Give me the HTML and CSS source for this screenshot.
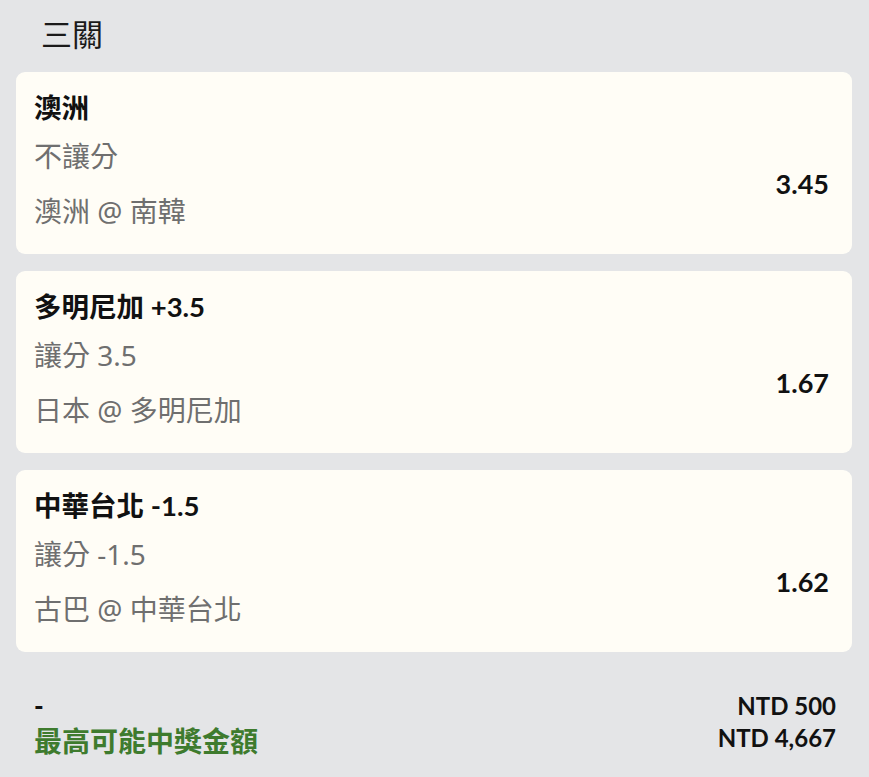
FILE: index.html
```html
<!DOCTYPE html>
<html lang="zh-Hant">
<head>
<meta charset="utf-8">
<title>三關</title>
<link rel="stylesheet" href="styles.css">
</head>
<body>
<div class="page">
  <h1 class="header">三關</h1>
  <div class="list">
    <div class="card">
      <div class="pick">澳洲</div>
      <div class="line line-1">不讓分</div>
      <div class="line line-2">澳洲 @ 南韓</div>
      <div class="odds">3.45</div>
    </div>
    <div class="card">
      <div class="pick">多明尼加 +3.5</div>
      <div class="line line-1">讓分 3.5</div>
      <div class="line line-2">日本 @ 多明尼加</div>
      <div class="odds">1.67</div>
    </div>
    <div class="card">
      <div class="pick">中華台北 -1.5</div>
      <div class="line line-1">讓分 -1.5</div>
      <div class="line line-2">古巴 @ 中華台北</div>
      <div class="odds">1.62</div>
    </div>
  </div>
  <div class="footer">
    <div class="footer-left">
      <div class="dash">-</div>
      <div class="max-label">最高可能中獎金額</div>
    </div>
    <div class="footer-right">
      <div class="amount">NTD 500</div>
      <div class="amount">NTD 4,667</div>
    </div>
  </div>
</div>
</body>
</html>
```
FILE: styles.css
```css
html, body {
  margin: 0;
  padding: 0;
  background: #e4e5e7;
}
body {
  font-family: "Lato", "Noto Sans CJK TC", sans-serif;
  color: #111;
}
.page {
  padding: 0 17px 0 16px;
}
.header {
  margin: 0;
  padding: 13px 0 0 25px;
  height: 58px;
  box-sizing: border-box;
  font-family: "Noto Sans CJK TC", sans-serif;
  font-weight: 400;
  font-size: 31px;
  line-height: 40px;
  color: #1a1a1a;
}
.list {
  display: flex;
  flex-direction: column;
  gap: 17px;
  margin-top: 14px;
}
.card {
  background: #fffdf6;
  border-radius: 9px;
  padding: 18px 23px 25px 18px;
  display: grid;
  grid-template-columns: 1fr auto;
  grid-template-rows: auto auto auto;
}
.pick {
  grid-column: 1;
  grid-row: 1;
  font-family: "Lato", "Noto Sans CJK TC", sans-serif;
  font-weight: 700;
  font-size: 27.5px;
  line-height: 36px;
  color: #111;
}
.line {
  grid-column: 1;
  font-family: "Noto Sans", "Noto Sans CJK TC", sans-serif;
  font-weight: 400;
  font-size: 28px;
  line-height: 36px;
  color: #6f6f6f;
}
.line-1 {
  grid-row: 2;
  margin-top: 12px;
}
.line-2 {
  grid-row: 3;
  margin-top: 19px;
}
.odds {
  grid-column: 2;
  grid-row: 2 / 4;
  align-self: center;
  padding-top: 12px;
  font-family: "Lato", sans-serif;
  font-weight: 700;
  font-size: 27px;
  line-height: 36px;
  color: #111;
}
.footer {
  display: flex;
  justify-content: space-between;
  margin-top: 38px;
  padding: 0 16px 0 18px;
}
.footer-left, .footer-right {
  display: flex;
  flex-direction: column;
}
.footer-right {
  align-items: flex-end;
}
.dash {
  font-family: "Lato", sans-serif;
  font-weight: 900;
  font-size: 26px;
  line-height: 32px;
  color: #111;
}
.max-label {
  font-family: "Noto Sans CJK TC", sans-serif;
  font-weight: 700;
  font-size: 28px;
  line-height: 36px;
  color: #3e7b2e;
}
.amount {
  font-family: "Lato", sans-serif;
  font-weight: 700;
  font-size: 24px;
  line-height: 32px;
  color: #111;
}
```
